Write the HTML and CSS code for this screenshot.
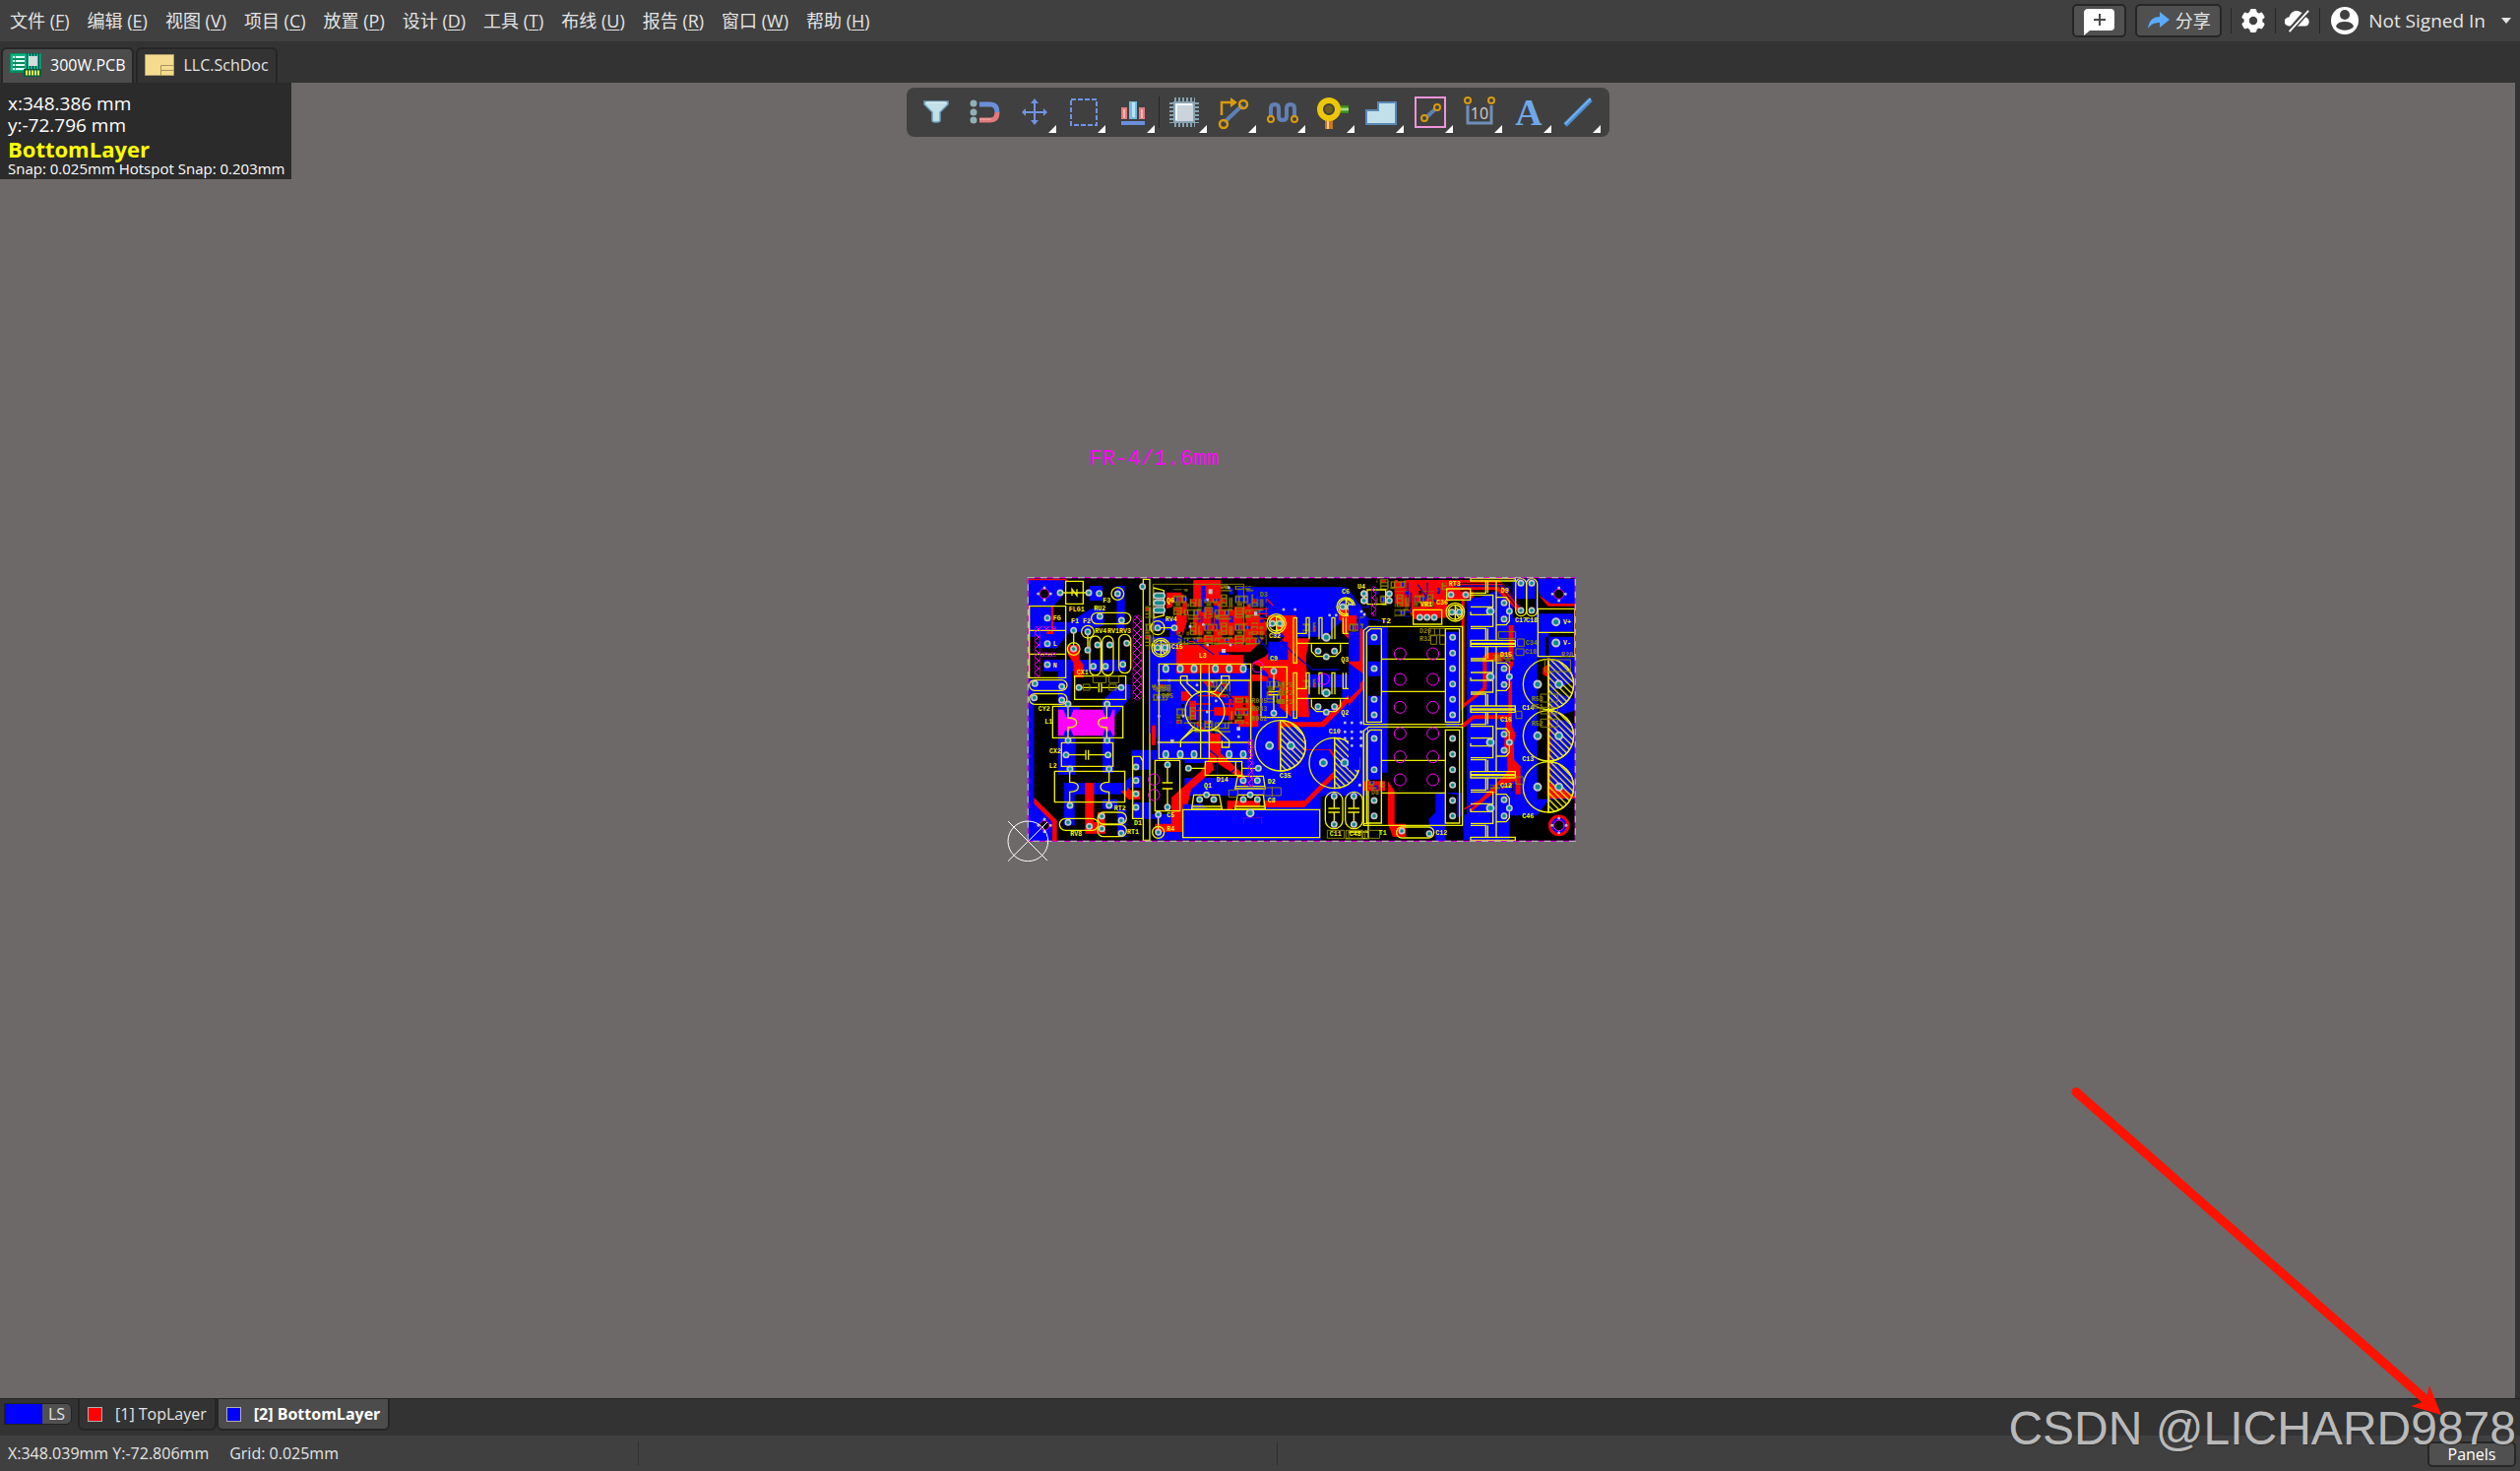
FILE: index.html
```html
<!DOCTYPE html>
<html lang="zh-CN">
<head>
<meta charset="utf-8">
<title>300W.PCB</title>
<link rel="stylesheet" href="styles.css">
</head>
<body>
<header class="menubar">
  <nav class="menus">
    <button class="menu">文件 (<u>F</u>)</button>
    <button class="menu">编辑 (<u>E</u>)</button>
    <button class="menu">视图 (<u>V</u>)</button>
    <button class="menu">项目 (<u>C</u>)</button>
    <button class="menu">放置 (<u>P</u>)</button>
    <button class="menu">设计 (<u>D</u>)</button>
    <button class="menu">工具 (<u>T</u>)</button>
    <button class="menu">布线 (<u>U</u>)</button>
    <button class="menu">报告 (<u>R</u>)</button>
    <button class="menu">窗口 (<u>W</u>)</button>
    <button class="menu">帮助 (<u>H</u>)</button>
  </nav>
  <div class="account">
    <button class="boxed comment" aria-label="Comment">
      <svg width="34" height="30" viewBox="0 0 34 30"><path fill="#fff" d="M4 3h24a4 4 0 0 1 4 4v14a4 4 0 0 1-4 4H7l-6 5V6a4 4 0 0 1 3-3z"/><path stroke="#484848" stroke-width="2" d="M17 8v12M11 14h12"/></svg>
    </button>
    <button class="boxed share">
      <svg width="24" height="20" viewBox="0 0 24 20"><path fill="#5aabff" d="M13 1l10 8-10 8v-5C7 12 4 14 1 18 2 10 6 6 13 6z"/></svg>
      <span>分享</span>
    </button>
    <span class="divider"></span>
    <button class="plain" aria-label="Settings">
      <svg width="26" height="26" viewBox="-13 -13 26 26"><g fill="#fff"><circle r="9.500"/><g id="cog"><rect x="-3.500" y="-12" width="7" height="24" rx="2"/></g><use href="#cog" transform="rotate(60)"/><use href="#cog" transform="rotate(120)"/></g><circle r="4.200" fill="#404040"/></svg>
    </button>
    <span class="divider"></span>
    <button class="plain" aria-label="Cloud offline">
      <svg width="26" height="26" viewBox="0 0 28 26"><path fill="#fff" d="M6 19a6 5 0 0 1-1-10C6 3 13 0 18 4c3 0 5 3 5 5 5 2 5 10-1 10z"/><path stroke="#404040" stroke-width="6" d="M4 26L26 1"/><path stroke="#fff" stroke-width="2" d="M5 25L26 2"/></svg>
    </button>
    <span class="divider"></span>
    <button class="plain user">
      <svg width="28" height="28" viewBox="0 0 28 28"><circle cx="14" cy="14" r="14" fill="#fff"/><circle cx="14" cy="8" r="5" fill="#404040"/><path fill="#404040" d="M5 20c1-4 5-5 9-5s8 1 9 5c-4 5-14 5-18 0z"/></svg>
      <span>Not Signed In</span>
      <svg width="10" height="6" viewBox="0 0 10 6"><path fill="#e4e4e4" d="M0 0h10L5 6z"/></svg>
    </button>
  </div>
</header>

<nav class="doctabs">
  <button class="doctab current">
    <svg width="32" height="26" viewBox="0 0 32 26"><path fill="#0a8a5c" d="M0 1h32v24H14v-4H0z"/><path fill="#0db483" d="M1 2h30v17H1z"/><path stroke="#dff" stroke-width="2" stroke-dasharray="2 1 9 9" d="M3 5h14M3 9h12M3 13h12M3 17h12"/><path stroke="#063" stroke-width="1" d="M3 7h12M3 11h12M3 15h12"/><path stroke="#045" stroke-width="16" stroke-dasharray="1 2" d="M17 9h14"/><rect x="19" y="4" width="9" height="10" fill="#d4dcdc"/><path fill="#0a5c40" d="M14 17h18v8H14z"/><path stroke="#ee5" stroke-width="5" stroke-dasharray="2 1" d="M16 21h14"/></svg>
    <span>300W.PCB</span>
  </button>
  <button class="doctab">
    <svg width="30" height="22" viewBox="0 0 30 22"><path fill="#f4dc8e" stroke="#b49c66" stroke-width="1" d="M.5.5h29v21H.5z"/><path fill="none" stroke="#a8925e" d="M30 11.500H16.500V22M17 16.500h13"/></svg>
    <span>LLC.SchDoc</span>
  </button>
</nav>

<main class="canvas">
  <div class="toolbar" role="toolbar">
    <button class="tool" aria-label="Filter"><svg viewBox="0 0 50 50"><path fill="#c2e0e8" stroke="#6f9ebb" stroke-width="1.500" d="M13 14h24v3l-8 8v9l-2 1h-4l-2-1v-9l-8-8z"/><path stroke="#eefafc" d="M15 15h20"/></svg></button>
    <button class="tool" aria-label="Snap"><svg viewBox="0 0 50 50"><g fill="#8fb0b5"><circle cx="13" cy="16" r="3.500"/><circle cx="13" cy="25" r="3.500"/><circle cx="13" cy="33" r="3.500"/></g><path fill="none" stroke="#6c8fdb" stroke-width="5" d="M19 17h11q7 0 7 8"/><path fill="none" stroke="#e27b7f" stroke-width="5" d="M19 33h11q7 0 7-8"/><path stroke="#ffb0b0" d="M19 32h12"/></svg></button>
    <button class="tool more" aria-label="Move"><svg viewBox="0 0 50 50"><path stroke="#7093e4" stroke-width="2" d="M25 13v24M13 25h24"/><path fill="#7093e4" d="M25 11l4 5h-8zM25 38l4-5h-8zM12 25l4-4v8zM38 25l-4-4v8z"/></svg></button>
    <button class="tool more" aria-label="Select area"><svg viewBox="0 0 50 50"><rect x="12" y="12" width="26" height="26" fill="none" stroke="#7093e4" stroke-width="2" stroke-dasharray="5 2"/></svg></button>
    <button class="tool more" aria-label="Align"><svg viewBox="0 0 50 50"><path fill="#e27b7f" d="M13 20h6v12h-6zM31 20h6v12h-6z"/><path fill="#ffb4b4" d="M15 22h2v9h-2zM33 22h2v9h-2z"/><path fill="#72bce0" d="M21 14h8v18h-8z"/><path fill="#b8e4f4" d="M24 15h3v15h-3z"/><path fill="#6c8fdb" d="M13 34h24v4H13z"/></svg></button>
    <span class="toolsep"></span>
    <button class="tool more" aria-label="Component"><svg viewBox="1 0 50 50"><g stroke="#87a3b2" stroke-width="30" stroke-dasharray="2 2"><path d="M15 25h21"/><path d="M25 15v21"/></g><path fill="#cbd3dc" stroke="#87a3b2" stroke-width="2" d="M15 15h20v20H15z"/><path fill="none" stroke="#f4f8fa" stroke-width="2" d="M17 33V17h16"/></svg></button>
    <button class="tool more" aria-label="Route"><svg viewBox="3 0 50 50"><path stroke="#5f7fb4" stroke-width="4" d="M18 35l18-17"/><g fill="none" stroke="#d99b0c" stroke-width="2.500"><circle cx="37" cy="17" r="4"/><circle cx="17" cy="37" r="4"/><path d="M15 28V15h12"/></g><path fill="#d99b0c" d="M24 10l7 5-7 5z"/></svg></button>
    <button class="tool more" aria-label="Length tuning"><svg viewBox="1 0 50 50"><path fill="none" stroke="#6280b4" stroke-width="4" d="M13 31V21q0-4 4-4t4 4v8q0 4 4 4t4-4v-8q0-4 4-4t4 4v10"/><g fill="#404040" stroke="#d99b0c" stroke-width="2"><circle cx="13" cy="32" r="3"/><circle cx="37" cy="32" r="3"/></g></svg></button>
    <button class="tool more" aria-label="Via"><svg viewBox="4 0 50 50"><path fill="#3a8c1c" d="M34 18h11v8H34z"/><path stroke="#9bdb80" stroke-width="3" d="M34 22h11"/><path fill="#c47a20" d="M21 30h8v12h-8z"/><path stroke="#ffc890" stroke-width="2" d="M24 30v12"/><circle cx="25" cy="22" r="9" fill="none" stroke="#edc607" stroke-width="6"/><circle cx="25" cy="22" r="4" fill="#6b5e20"/></svg></button>
    <button class="tool more" aria-label="Polygon"><svg viewBox="1 0 50 50"><path fill="#c2e0ea" stroke="#5988b4" stroke-width="2" d="M10 23h12v-8h18v22H10z"/></svg></button>
    <button class="tool more" aria-label="Keepout"><svg viewBox="1 0 50 50"><rect x="10" y="10" width="30" height="30" fill="none" stroke="#ee94dc" stroke-width="2"/><path stroke="#6280b4" stroke-width="4" d="M20 31l11-10"/><g fill="#404040" stroke="#d99b0c" stroke-width="2"><circle cx="32" cy="20" r="3"/><circle cx="19" cy="31" r="3"/></g></svg></button>
    <button class="tool more" aria-label="Dimension"><svg viewBox="1 0 50 50"><path fill="none" stroke="#6f8fb8" stroke-width="3" d="M13 18v18h24V18"/><g fill="#404040" stroke="#d99b0c" stroke-width="2"><circle cx="13" cy="13" r="3"/><circle cx="37" cy="13" r="3"/></g><text class="dim" x="25" y="32">10</text></svg></button>
    <button class="tool more" aria-label="Text"><svg viewBox="1 0 50 50"><text class="bigA" x="25" y="38">A</text></svg></button>
    <button class="tool more" aria-label="Line"><svg viewBox="1 0 50 50"><path stroke="#4d8ed0" stroke-width="5" d="M12 38l26-26"/><path stroke="#82b8f4" stroke-width="1.500" d="M12 37l26-26"/></svg></button>
  </div>

  <div class="hud">
    <span class="pos">x:348.386 mm</span>
    <span class="pos">y:-72.796 mm</span>
    <strong class="active-layer">BottomLayer</strong>
    <span class="snap">Snap: 0.025mm Hotspot Snap: 0.203mm</span>
  </div>

  <span class="boardnote">FR-4/1.6mm</span>

  <svg class="board" viewBox="0 0 1800 900" aria-label="PCB">
    <defs>
      <pattern id="hatch" width="14" height="14" patternUnits="userSpaceOnUse" patternTransform="rotate(-45)"><path stroke="#f8f800" stroke-width="4" d="M2 0v14"/></pattern>
      <pattern id="mesh" width="24" height="24" patternUnits="userSpaceOnUse"><path fill="none" stroke="#f0f" stroke-width="3" d="M0 0l24 24M24 0L0 24"/></pattern>
      <pattern id="smd" width="94" height="86" patternUnits="userSpaceOnUse">
        <path fill="#000" d="M0 24h30v14H0zM56 38h38v8H56zM26 60h8v26h-8z"/>
        <path fill="#00f" d="M4 6h14v18H4zM66 48h12v16H66zM78 66h12v20H78zM30 8h18v12H30z"/>
        <path fill="#f00" d="M6 42h14v8H6zM56 14h10v10H56z"/>
        <g fill="none" stroke="#8c8400" stroke-width="4"><path d="M4 6h36v18H4zM14 6v18M30 6v18M54 2h16v34H54zM54 12h16M54 26h16M4 40h22v30H4zM4 50h22M4 60h22M36 48h40v16H36zM46 48v16M66 48v16M36 74h50M80 10v30M86 10v30M42 30h8M42 36h8"/></g>
        <path fill="#8c8400" d="M8 28h16v6H8zM74 44h14v6H74zM32 66h16v5H32z"/>
      </pattern>
      <g id="cap"><circle r="77"/><path d="M0-77V77"/><path class="hatched" d="M0-77A77 77 0 0 1 0 77z"/></g>
      <g id="sink"><path d="M372 38h136v7H372zM372 45h46v37h-46M372 88h68v36h-68M372 139v9h68v36h-68M372 190h46v36M424 45v37M424 190v36M450 45v50M450 180v46M372 226h136v9H372z"/><path d="M450 95h30l10 12v60l-10 12h-30z"/></g>
      <g id="comb"><path d="M462 0h10v138h-10zM652 0h10v138h-10zM472 78h180M472 48h29V0h9v66M540 66V0h9v66M579 66V0h9v66M613 0v48h39M622 0v48M517 81v22l15 15h58l15-15V81"/></g>
    </defs>

    <rect x="88" y="35" width="1668" height="803"/>

    <!-- mains input section -->
    <g>
      <path class="b" d="M90 38h110l-5 50-30 35H90zM90 125h75v90H90zM135 170h80l65-40h40v50l-70 20h-35l-40 50h-60zM135 285h250v35H220l-5 140h-35V320h-45zM90 345h112v40H90zM90 385h16v320l62 65-10 68H90zM275 60h40v45h-40zM358 60h25v130h-25zM180 430h65v30h-65zM315 410l50-50h35v40l-50 60v170h-35zM180 520h52v115h-52zM198 660h180l25-20h30v35h-30l-30 20H230v95h-32zM403 560h190v60H403zM403 720h190v50H403zM315 710h45v30h-45zM360 740h28v85h-28z"/>
      <path class="r" d="M88 38h115l12 12-14-7H88zM165 122v85h-20v-8h14v-77zM210 240h35v45l12 15v40h-30v-45l-17-25zM106 705l70 70v63h-14v-58l-56-56zM262 660h27v120h35v35h-62zM370 685h20v-12l12 10h28v28h-36zM300 750h22v60h-22z"/>
      <path class="m" d="M180 437h172v80H180z"/>
      <path class="b" d="M196 437h30l-8 22h-14zM316 437h30l-8 22h-14zM196 517l6-20 8 10 8-10 8 20zM316 517l6-20 8 10 8-10 8 20z"/>
      <g class="y"><path d="M203 46h53v69h-53zM186 81h87M222 90V70l15 20V70M92 122h111v218H92zM92 196h111M92 268h111M230 335h156v71H230zM240 370h60M313 370h60M304 355v30M312 355v30M163 427h214v96H163zM210 420v42q26 0 26 15t-26 15v35M328 420v42q-26 0-26 15t26 15v35M190 538h157v72H190zM204 575h60M272 575h60M264 560v30M272 560v30M169 625h214v94H169zM215 620v38q26 0 26 15t-26 15v35M335 620v38q-26 0-26 15t26 15v35M407 580h23l8 14v175h-31zM270 200v60M227 196v60M439 40h20v795h-20z"/>
        <rect x="281" y="142" width="120" height="34" rx="17"/><rect x="276" y="213" width="34" height="120" rx="17"/><rect x="314" y="213" width="34" height="120" rx="17"/><rect x="365" y="208" width="36" height="118" rx="17"/><rect x="92" y="347" width="115" height="32" rx="16"/><rect x="92" y="389" width="115" height="32" rx="16"/><rect x="184" y="769" width="118" height="36" rx="18"/><rect x="300" y="750" width="88" height="36" rx="18"/><rect x="300" y="788" width="88" height="36" rx="18"/><circle cx="361" cy="84" r="19"/><circle cx="227" cy="252" r="19"/><circle cx="270" cy="200" r="19"/></g>
      <path class="ol" d="M286 335h40v20h-40zM335 335h30v20h-30zM256 360h20v18h-20zM335 360h22v18h-22z"/>
      <rect class="mesh" x="408" y="150" width="27" height="258" rx="13"/><path class="mesh" d="M109 185h64v9h-49v70h49v10h-49v62h-15z"/>
      <g class="mo"><circle cx="138" cy="84" r="15" fill="#000"/><circle cx="138" cy="790" r="15" fill="#000"/></g>
      <path class="via" d="M138 66h0M138 103h0M119 84h0M157 84h0M138 771h0M138 809h0M119 790h0M157 790h0"/>
      <g class="pad"><path id="p1" d="M186 81h0M273 81h0M305 83h0M361 84h0M147 158h0M147 236h0M147 300h0M307 153h0M373 165h0M227 196h0M227 252h0M270 200h0M270 256h0M300 240h0M337 240h0M389 235h0M287 305h0M324 305h0M377 299h0M109 358h0M191 367h0M107 401h0M191 408h0M243 370h0M372 370h0M210 420h0M329 420h0M210 531h0M329 531h0M204 575h0M332 575h0M216 618h0M335 618h0M216 729h0M335 729h0M210 781h0M275 793h0M313 762h0M313 800h0M372 775h0M372 814h0M417 612h0M417 653h0M417 694h0M417 735h0M437 62h0"/></g><use href="#p1" class="hole"/>
      <g class="lbl"><text x="212" y="139">FLG1</text><text x="316" y="112">F3</text><text x="289" y="135">RU2</text><text x="164" y="165">FG</text><text x="164" y="243">L</text><text x="164" y="308">N</text><text x="219" y="175">F1</text><text x="255" y="175">F2</text><text x="292" y="204">RV4</text><text x="330" y="204">RV1</text><text x="366" y="203">RV3</text><text x="236" y="329">CX1</text><text x="119" y="440">CY2</text><text x="139" y="480">L1</text><text x="153" y="570">CX2</text><text x="152" y="616">L2</text><text x="350" y="745">RT2</text><text x="390" y="816">RT1</text><text x="217" y="823">RV8</text><text x="411" y="788">D1</text></g>
    </g>

    <!-- controller and switching stage -->
    <g transform="translate(435 0)">
      <path class="b" d="M30 160h90v80h200v70l130 20h180V70l60 90v675H45V520l-20-10V215h60v-20H30zM285 65h340v90l-70 60H400l-20-60-95-60z"/>
      <path d="M40 50h115v105H60zM45 300h60v-60h15v60zM30 590h100v165H30zM330 290h30v160h-30zM500 225h110v60H500zM510 370h100v65H510zM545 700h150v138H545zM370 155l80 10v40l-60-10zM130 600h180v45H130zM140 700h230v40H140zM250 260h120l-40 40zM240 60h50v90h-50zM300 220h100v60h-60z"/>
      <path class="r" d="M157 42h83v80h80v-10l60 60v40l-50 50H235v-30h-80zM95 80h30l12 30v60l-12 40h-20v-90l-30 10V80zM380 150h90v70h40l-10 60 10 180h-35v-20h-20v20l-35-30v-80l-60-20h-25v80l20 30v50h-60v-60l-20-30h-50l-40-50h200v-20l-20-20-30-15 40-20 60-60zM105 240h130v30h75v56H105zM80 370h30v12h35v28H92v-20H80zM220 430h45v-25h60v75h-60v-25h-45zM205 510h35v60l75 70v30l-25-30-60-40h-15l5 20-70 60-20 90v40H40v-25h50v-80l90-80 25-40zM145 410h20v60h-20zM415 490h140l50-50 82-85v-20l-100 100-40 40H415v85h155l15 25v40l-90 90H360v20h135l95-95v-60l-15-22H430v-68M600 130h40v35h-40zM610 160h35l35 40v92h-40v-60l-30-30zM200 740h60v-25h110v20h-90l-25 30h-55zM30 485h12v60H30z"/>
      <path class="b" d="M60 318h42v25H60zM60 350h60v140H60zM60 490h55l50 70 15 30-60-15H60zM215 350h110v45h-60l-50-20zM245 500h80v40h-80zM125 805v-80h60l40 40 280 5v35zM385 230h60v55h-60zM425 495h110l-50 15v60h-60zM180 60h14v80h-14zM210 120h24v60h-24z"/>
      <path class="smd" d="M90 70h50v80H90zM140 100h240v110H140zM110 200h270v40H110zM240 60h100v60H240zM30 360h60v50H30zM200 340h70v60H200zM105 420h60v60H105zM270 400h55v80h-55zM160 470h110v40H160zM380 350h55v70h-55zM490 170h40v30h-40zM630 150h50v40h-50zM10 120h30v140H10zM490 340h40v30h-40z"/>
      <path class="rl" d="M315 130h70M315 145h70M315 160h70M315 180h60M315 195h60M180 140v60M200 140v60M220 140v60M140 230h200M170 395h90M175 430v60M160 420h50M160 440h90M250 420h75M250 440h75M165 480l50 35M380 100l20 20"/>
      <path class="bl" d="M290 65h320l60 60M380 175l80 90 60 50h80M350 210l60 80M120 490l110 90v90l-20 25M40 190h60v20l60 30M330 580l-60 50M150 220l70 50M240 360l40 50"/>
      <path class="b" d="M126 742h415v83H126z"/>
      <g class="y"><use href="#comb" y="157"/><use href="#comb" y="325"/><path d="M35 66l32 8v76l-32 8zM52 298h280v288H52zM52 348h280M52 537h280M179 298v288M205 298v288M118 335h20v22l30 25h54l20-25v-22h24v20l-32 42M118 552v-20l38-32h76l34 32v20h-22v-20M118 335v22l36 42M118 532l40-42M363 307h79v154h-79zM402 320v58M402 395v55M386 382h32M386 392h32M193 595h112v42H193zM286 595v42M142 616h50M305 616h50M40 592h76v154H40zM78 605v55M62 660h32M62 678h32M78 678v50M125 742h417v85H125zM158 697h78l8 42h-92zM292 697h78l6 42h-92zM292 640h78l6 38h-92zM152 732h92M284 732h92M286 671h90M50 760v50M48 188h50M620 830h70v-20h-60M690 190v640M676 500v285h14"/>
        <circle cx="192" cy="442" r="60"/><circle cx="48" cy="188" r="21"/><circle cx="58" cy="248" r="28"/><circle cx="58" cy="248" r="22"/><path class="hatched" d="M58 226a22 22 0 0 1 0 44z"/><circle cx="410" cy="175" r="29"/><circle cx="410" cy="175" r="23"/><path class="hatched" d="M410 152a23 23 0 0 1 0 46z"/><circle cx="622" cy="124" r="28"/><circle cx="622" cy="124" r="23"/><path class="hatched" d="M622 101a23 23 0 0 1 0 46z"/><circle cx="50" cy="811" r="18"/><use href="#cap" x="422" y="547"/><use href="#cap" x="587" y="600"/><rect x="559" y="688" width="53" height="112" rx="26"/><rect x="620" y="688" width="53" height="112" rx="26"/><path d="M586 700v37M568 738h35M568 750h35M586 752v35M646 700v37M628 738h35M628 750h35M646 752v35"/></g>
      <path class="ol" d="M34 55h277v180H34zM372 675h52v24h-52zM397 672v30M265 682h28v22h-28zM565 805h52v24h-52zM622 805h52v24h-52z"/>
      <path class="mesh" d="M324 530h14v140h-14z"/><path fill="none" stroke="#a000a0" stroke-width="2" d="M310 785v-18h55v18"/>
      <g class="mo"><circle cx="353" cy="307" r="17"/><circle cx="554" cy="344" r="17"/><circle cx="37" cy="650" r="17"/><circle cx="37" cy="697" r="17"/></g>
      <g class="pad"><path id="p2" d="M44 90h18M44 112h18M44 134h18M48 188h0M99 188h0M48 248h0M70 248h0M73 310v5M117 310v5M159 310v5M224 310v5M266 310v5M309 310v5M73 571v5M117 571v5M159 571v5M266 571v5M309 571v5M402 320h0M402 448h0M398 175h0M420 175h0M612 124h0M634 124h0M537 259h0M587 259h0M562 276h0M537 428h0M587 428h0M562 445h0M142 616h0M355 616h0M78 605h0M78 734h0M309 653h0M352 653h0M176 711h0M219 711h0M309 711h0M352 711h0M197 697h0M330 697h0M50 757h0M50 811h0M586 701h0M586 787h0M646 701h0M646 787h0M677 84h0M677 105h0"/></g><use href="#p2" class="hole"/>
      <g class="pad big"><path id="p3" d="M562 217h0M562 386h0M330 752h0M389 547h0M454 547h0M553 599h0M618 599h0"/></g><use href="#p3" class="hole big"/>
      <path class="via" d="M265 65h0M200 102h0M432 132h0M467 132h0M572 149h0M592 149h0M52 348h0M84 348h0M52 400h0M52 457h0M126 457h0M168 362h0M199 444h0M207 473h0M215 350h0M619 477h0M640 477h0M668 477h0M619 505h0M640 524h0M668 547h0M619 524h0M640 505h0M668 524h0M295 520h0M226 410h0M147 184h0M187 178h0M200 240h0M52 537h0M664 667h0M270 240h0M670 138h0M678 147h0"/>
      <path fill="#c0c0c0" d="M203 70h12v15h-12zM342 139h10v12h-10zM243 252h12v12h-12zM87 528h11v11H87zM289 490h11v11h-11z"/>
      <g class="lbl"><text x="75" y="110">Q6</text><text x="71" y="168">RV4</text><text x="89" y="253">C15</text><text x="173" y="278">L3</text><text x="387" y="220">C32</text><text x="390" y="289">C9</text><text x="609" y="85">C6</text><text x="607" y="291">Q3</text><text x="607" y="454">Q2</text><text x="569" y="509">C10</text><text x="419" y="644">C35</text><text x="227" y="658">D14</text><text x="383" y="664">D2</text><text x="383" y="719">C8</text><text x="189" y="675">Q1</text><text x="76" y="766">C5</text><text x="76" y="806">R4</text><text x="572" y="823">C11</text><text x="632" y="823">C48</text></g>
      <g class="lbl olive"><text x="239" y="69">D8</text><text x="359" y="92">D3</text><text x="413" y="370">R075</text><text x="413" y="392">R072</text><text x="413" y="420">R071</text><text x="334" y="416">R085</text><text x="334" y="442">R083</text><text x="334" y="470">R082</text><text x="32" y="378">D005</text><text x="60" y="402">D05</text></g>
    </g>

    <!-- transformer, rectifier and output stage -->
    <g transform="translate(1065 0)">
      <path class="b" d="M60 183h60v440H60V495H46V150H0v-30h35zM0 140h35v480H0zM100 195l18-10v440h-18zM295 190h40v55h-40zM295 245h42v245h-42zM295 690h55v145h140V760h85l35-50V200h-35V100h-85V60l-90 35h-40v660l-30 10v-70h-10zM265 690l30-30v180h-30v-30l-20-10v-30l20-20zM575 38h115v80h-80l-30-35zM575 145h110v55H575zM600 215h86v60h-86zM500 38h70v120h-70zM575 280h115v430H575zM60 500h40v150H60z"/>
      <path d="M60 240h40v50H60zM60 335h40v60H60zM100 195h195v287H100zM102 499h193v190H102zM295 200h40v-8h-40zM300 500h40v50h-40zM620 460l70 20v-40zM620 380l66-30v55z"/>
      <path class="b" d="M100 195h18v290h-18zM102 499h16v130h-16z"/>
      <path class="r" d="M140 42h320l60 80v20l-70-70H380v25l-80 10v50l-100 5-20-30-40-20zM0 290h30l18-10v50L0 295zM0 405l48-45v12L0 425zM0 150h25v45H0zM344 100h9v330l-10 10zM344 425l65-55V275l15-12h65l10 15-10 12h-68v85l-75 60zM344 482l35-28h115v12H382l-38 32zM488 180h14v120l-10 20h-8v30h14v140l10 20-4 30v50l20 20v85h-15v-40l-40 10-90 80h-12l95-95 22-25v-50l-10-30 5-65 8-25zM578 88l30 34h82v-8h-74zM592 310l15-10v-20h5v380l78 40v8h-80V340l-18-10zM120 655l20 30v100h35v40h-40l-15-40zM46 655h65v30H46zM605 440h10v260h-10z"/>
      <path class="rl" d="M370 55h95l50 60M370 65h95l50 60M352 740l150-80"/>
      <path stroke="#400000" fill="none" stroke-width="4" d="M340 52h130l50 60M330 62h130l50 60M340 75h110"/>
      <path class="bl" d="M0 125h60v-40M118 200v-30l-60-10-20-30M320 60h150l50 60M150 140h40v-60M210 55l50 70M180 50v60M240 50v40l30 20"/>
      <path class="smd" d="M85 40h35v80H85zM115 42h60v28h-60zM140 75h50v80h-50zM200 75h60v50h-60zM270 50h30v35h-30zM430 665h70v25h-70zM440 270h65v20h-65zM0 160h30v40H0zM60 655h50v25H60z"/>
      <path class="ol" d="M245 190h50v20h-50zM262 190v20M278 190v20M250 212h18v26h-18zM278 212h18v26h-18z"/>
      <g class="y"><path d="M57 72h56v44H57zM197 133h87v44h-87zM299 69h72v34h-72zM577 130h112v145H577zM577 202h112M46 196l15-12h286v298H46zM55 202l12-11h33v284H55zM295 191h43v284h-43zM100 283h195M100 382h195M46 502l15-12h286v300H46zM55 510l12-11h33v284H55zM295 499h43v284h-43zM100 592h195M100 691h195"/>
        <use href="#sink" y="0"/><use href="#sink" y="200"/><use href="#sink" y="400"/><use href="#sink" y="600"/>
        <rect x="509" y="38" width="33" height="114" rx="16"/><rect x="542" y="38" width="33" height="114" rx="16"/><rect x="146" y="795" width="114" height="33" rx="16"/><circle cx="325" cy="140" r="28"/><circle cx="325" cy="140" r="22"/><path class="hatched" d="M325 118a22 22 0 0 1 0 44z"/><use href="#cap" x="609" y="360"/><use href="#cap" x="609" y="517"/><use href="#cap" x="609" y="673"/></g>
      <path class="ol" d="M457 200h52v20h-52zM515 222h20v22h-20zM510 252h24v20h-24zM585 390h52v24h-52zM585 430h52v20h-52zM585 466h52v24h-52zM598 285h78v36h-78zM510 442h18v22h-18zM510 642h22v22h-22zM0 805h40v24H0zM50 805h45v24H50z"/>
      <rect class="mesh" x="70" y="62" width="13" height="90" rx="6"/>
      <g class="mo"><circle cx="157" cy="267" r="18"/><circle cx="257" cy="267" r="18"/><circle cx="157" cy="345" r="18"/><circle cx="257" cy="345" r="18"/><circle cx="157" cy="430" r="18"/><circle cx="257" cy="430" r="18"/><circle cx="157" cy="510" r="18"/><circle cx="257" cy="510" r="18"/><circle cx="157" cy="581" r="18"/><circle cx="257" cy="581" r="18"/><circle cx="157" cy="651" r="18"/><circle cx="257" cy="651" r="18"/><circle cx="641" cy="85" r="15" fill="#000"/></g>
      <circle cx="641" cy="790" r="28" fill="#00f" stroke="#f00" stroke-width="9"/><circle cx="641" cy="790" r="16" stroke="#f0f" stroke-width="3"/>
      <g class="pad"><path id="p4" d="M78 217h0M78 312h0M78 406h0M78 453h0M78 525h0M78 620h0M78 714h0M78 761h0M317 217h0M317 265h0M317 312h0M317 359h0M317 406h0M317 453h0M317 525h0M317 573h0M317 620h0M317 667h0M317 714h0M317 761h0M474 112h0M474 161h0M490 137h0M474 312h0M474 361h0M490 337h0M474 512h0M474 561h0M490 537h0M474 712h0M474 761h0M490 737h0M525 52h0M558 52h0M525 135h0M558 135h0M217 156h0M239 156h0M261 156h0M312 87h0M357 87h0M315 140h0M337 140h0M47 84h0M47 105h0M124 84h0M124 105h0M162 807h0M246 815h0"/></g><use href="#p4" class="hole"/>
      <g class="pad big"><path id="p5" d="M432 137h0M432 337h0M432 537h0M432 737h0M632 170h0M632 234h0M576 360h0M641 360h0M576 517h0M641 517h0M576 673h0M641 673h0"/></g><use href="#p5" class="hole big"/>
      <path class="via" d="M10 477h0M38 477h0M10 505h0M38 524h0M10 524h0M38 547h0M10 547h0M38 505h0M34 667h0M641 66h0M641 105h0M621 85h0M661 85h0M641 768h0M641 812h0M620 790h0M663 790h0M39 138h0M48 147h0"/>
      <g class="lbl"><text x="27" y="70">U4</text><text class="big" x="100" y="175">T2</text><text x="92" y="819">T1</text><text x="305" y="60">RT3</text><text x="219" y="122">VR1</text><text x="267" y="117">C36</text><text x="464" y="80">D9</text><text x="507" y="170">C17</text><text x="540" y="170">C18</text><text x="654" y="176">V+</text><text x="654" y="241">V-</text><text x="462" y="275">D15</text><text x="462" y="475">C16</text><text x="462" y="676">C12</text><text x="529" y="437">C14</text><text x="529" y="594">C13</text><text x="529" y="768">C46</text><text x="265" y="820">C12</text></g>
      <g class="lbl olive"><text x="216" y="204">D20</text><text x="216" y="229">R32</text><text x="539" y="239">C34</text><text x="537" y="267">C18</text><text x="557" y="410">R53</text><text x="557" y="436">R51</text><text x="557" y="486">R52</text><text x="648" y="275">R20</text><text x="69" y="695">D8</text></g>
    </g>

    <path fill="none" stroke="#d010d0" stroke-width="4" d="M88 35h1668v803H88z"/>
    <path fill="none" stroke="#b0b0b0" stroke-width="4" stroke-dasharray="20 18" d="M88 35h1668v803H88z"/>
    <g fill="none" stroke="#fff" stroke-width="3"><circle cx="88" cy="838" r="61"/><path d="M27 777l120 120M147 780L27 899"/></g>
  </svg>
</main>

<nav class="layerbar">
  <div class="layerset"><span class="setcolor"></span><button class="ls">LS</button></div>
  <div class="layertabs">
    <button class="layer"><i class="swatch top"></i>[1] TopLayer</button>
    <button class="layer current"><i class="swatch bottom"></i>[2] BottomLayer</button>
  </div>
</nav>

<footer class="status">
  <div class="cell readout"><span>X:348.039mm Y:-72.806mm</span><span>Grid: 0.025mm</span></div>
  <div class="cell"></div>
  <div class="cell last"><button class="panels">Panels</button></div>
</footer>

<svg class="pointer" width="400" height="350" viewBox="0 0 400 350" aria-hidden="true"><path stroke="#ff1200" stroke-width="9" stroke-linecap="round" d="M19 17l358 315"/><path fill="#ff1200" d="M378 315l12 30-31-9 15-5z"/></svg>
<div class="watermark">CSDN @LICHARD9878</div>
</body>
</html>
```
FILE: styles.css
```css
* { box-sizing: border-box; }

body {
  position: relative;
  display: flex;
  flex-direction: column;
  min-height: 100vh;
  margin: 0;
  overflow: hidden;
  background: #333;
  color: #e4e4e4;
  font: 16px/24px "Open Sans", "Noto Sans CJK SC", sans-serif;
}

button {
  margin: 0;
  padding: 0;
  border: 0;
  background: none;
  color: inherit;
  font: inherit;
  white-space: nowrap;
}

svg { display: block; }

/* menu bar */
.menubar {
  display: flex;
  justify-content: space-between;
  height: 42px;
  background: #404040;
}
.menus {
  display: flex;
  align-items: center;
  gap: 18px;
  padding-left: 10px;
}
.menu { font-size: 18px; }
.menu u { text-underline-offset: 2px; }
.account {
  display: flex;
  align-items: center;
  gap: 9px;
  padding-right: 9px;
}
.boxed {
  display: flex;
  align-items: center;
  justify-content: center;
  height: 34px;
  border: 2px solid #262626;
  border-radius: 5px;
  background: #505050;
}
.comment { width: 55px; }
.share {
  gap: 5px;
  width: 88px;
  font-size: 18px;
}
.divider {
  width: 1px;
  height: 26px;
  background: #262626;
}
.user {
  display: flex;
  align-items: center;
  gap: 10px;
  padding-left: 2px;
}
.user svg:last-child { margin-left: 6px; }
.user span { font-size: 19px; }

/* document tabs */
.doctabs {
  display: flex;
  align-items: flex-end;
  gap: 2px;
  height: 42px;
  padding-left: 1px;
}
.doctab {
  display: flex;
  align-items: center;
  gap: 9px;
  height: 36px;
  padding: 0 7px 2px;
  border: 2px solid #262626;
  border-bottom: 0;
  border-radius: 6px 6px 0 0;
}
.doctab.current {
  background: #4c4c4c;
  color: #fff;
}

/* drawing area */
.canvas {
  position: relative;
  flex: 1;
  margin-right: 5px;
  padding-top: 5px;
  background: #6d6968;
}
.toolbar {
  display: flex;
  align-items: center;
  width: fit-content;
  height: 50px;
  margin: 0 auto;
  padding: 0 6px 0 5px;
  border-radius: 8px;
  background: #404040;
}
.tool {
  position: relative;
  width: 50px;
  height: 50px;
}
.tool.more::after {
  content: "";
  position: absolute;
  right: 3px;
  bottom: 4px;
  border: 4px solid transparent;
  border-right-color: #fff;
  border-bottom-color: #fff;
}
.toolsep {
  width: 1px;
  height: 32px;
  margin: 0 1px;
  background: #262626;
}
.dim {
  fill: #d0d0d0;
  font: 16px "Open Sans", sans-serif;
  text-anchor: middle;
}
.bigA {
  fill: #6fa8ea;
  font: bold 38px "Liberation Serif", serif;
  text-anchor: middle;
}

.hud {
  position: absolute;
  top: 0;
  left: 0;
  display: flex;
  flex-direction: column;
  width: 296px;
  height: 98px;
  padding: 10px 0 0 8px;
  background: #2b2b2b;
  color: #fff;
  white-space: nowrap;
}
.pos {
  font-size: 19px;
  line-height: 22px;
}
.active-layer {
  color: #ff0;
  font-size: 22px;
  line-height: 26px;
}
.snap {
  font-size: 15px;
  line-height: 14px;
}

.boardnote {
  position: absolute;
  top: 371px;
  left: 1106px;
  color: #f0f;
  font: 22px/24px "Liberation Mono", monospace;
}
.board {
  position: absolute;
  top: 491px;
  left: 1015px;
  width: 600px;
  height: 300px;
}
.b { fill: #00f; }
.r { fill: #f00; }
.m { fill: #f0f; }
.rl { fill: none; stroke: #f00; stroke-width: 4; }
.bl { fill: none; stroke: #0000c0; stroke-width: 4; }
.y { fill: none; stroke: #f0f000; stroke-width: 4; }
.ol { fill: none; stroke: #8c8400; stroke-width: 3; }
.mo { fill: none; stroke: #f0f; stroke-width: 3; }
.hatched { fill: url(#hatch); }
.mesh { fill: url(#mesh); stroke: #c000c0; stroke-width: 2; }
.smd { fill: url(#smd); }
.pad { fill: none; stroke: #c4c4c4; stroke-width: 21; stroke-linecap: round; }
.pad.big { stroke-width: 27; }
.hole { fill: none; stroke: #008c8c; stroke-width: 11; stroke-linecap: round; }
.hole.big { stroke-width: 15; }
.via { stroke: #b8b8c8; stroke-width: 9; stroke-linecap: round; }
.lbl {
  fill: #f8f800;
  font: bold 20px "Liberation Mono", monospace;
}
.lbl .big { font-size: 24px; }
.lbl.olive { fill: #8c8400; }

/* layer tabs */
.layerbar {
  display: flex;
  gap: 6px;
  height: 38px;
  padding-left: 4px;
  border-top: 1px solid #222;
}
.layerset {
  display: flex;
  width: 69px;
  height: 22px;
  margin-top: 4px;
  border: 1px solid #222;
  border-radius: 0 6px 6px 0;
  overflow: hidden;
}
.setcolor {
  width: 38px;
  background: #00f;
}
.ls {
  flex: 1;
  background: #505050;
  line-height: 20px;
}
.layertabs { display: flex; }
.layer {
  display: flex;
  align-items: center;
  gap: 13px;
  height: 32px;
  padding: 0 8px;
  border: 2px solid #262626;
  border-top: 0;
  border-radius: 0 0 6px 6px;
}
.layer.current {
  background: #4c4c4c;
  color: #fff;
  font-weight: 700;
}
.swatch {
  width: 15px;
  height: 15px;
  border: 1px solid #b0b0b0;
}
.top { background: #f00; }
.bottom { background: #00f; }

/* status bar */
.status {
  display: flex;
  align-items: center;
  height: 36px;
  background: #404040;
}
.cell {
  flex: 0 0 649px;
  height: 24px;
  border-right: 1px solid #303030;
}
.readout {
  display: flex;
  gap: 21px;
  padding-left: 8px;
}
.cell.last {
  display: flex;
  flex: 1;
  justify-content: flex-end;
  padding-right: 4px;
  border: 0;
}
.panels {
  width: 90px;
  height: 26px;
  border: 2px solid #262626;
  border-radius: 5px;
  background: #505050;
  color: #fff;
  line-height: 20px;
}

/* annotations over the window */
.pointer {
  position: absolute;
  right: 70px;
  bottom: 52px;
}
.watermark {
  position: absolute;
  right: 4px;
  bottom: 16px;
  color: rgba(205, 205, 205, 0.9);
  font: 48px/54px "Liberation Sans", sans-serif;
  text-shadow: 1px 1px 2px #333;
}
```
